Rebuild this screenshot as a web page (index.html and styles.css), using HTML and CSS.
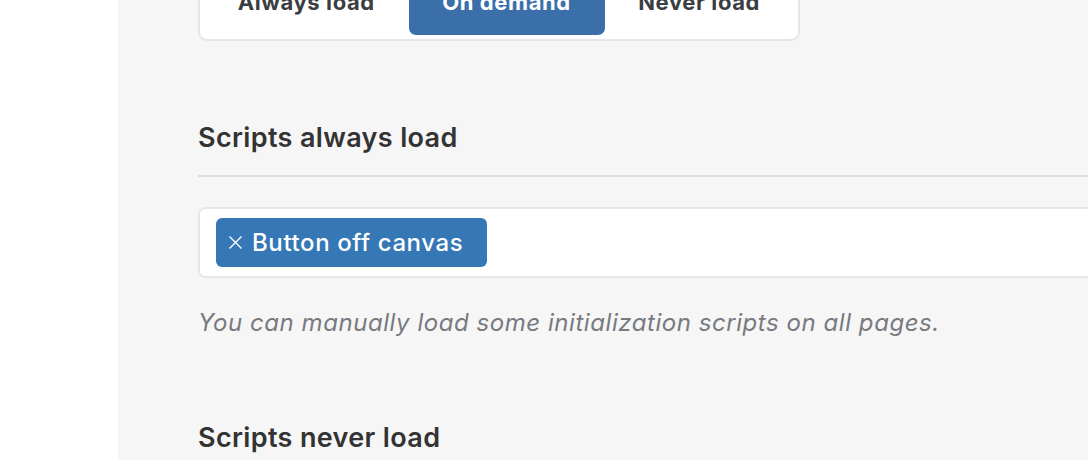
FILE: index.html
```html
<!DOCTYPE html>
<html>
<head>
<meta charset="utf-8">
<link rel="stylesheet" href="styles.css">
</head>
<body>
<div class="layout">
  <aside class="sidebar"></aside>
  <main class="main">
    <div class="content">
      <div class="segmented">
        <button class="seg">Always load</button>
        <button class="seg active">On demand</button>
        <button class="seg">Never load</button>
      </div>

      <section class="section first">
        <h2 class="section-title">Scripts always load</h2>
        <div class="tag-input">
          <span class="tag"><svg class="tag-x" width="15" height="15" viewBox="0 0 15 15"><path d="M1.5 1.5 L13.5 13.5 M13.5 1.5 L1.5 13.5" stroke="#ffffff" stroke-width="1.4" fill="none"/></svg>Button off canvas</span>
        </div>
        <p class="help">You can manually load some initialization scripts on all pages.</p>
      </section>

      <section class="section second">
        <h2 class="section-title">Scripts never load</h2>
      </section>
    </div>
  </main>
</div>
</body>
</html>
```

FILE: styles.css
```css
html, body {
  margin: 0;
  padding: 0;
  height: 100%;
  overflow: hidden;
}
body {
  font-family: Inter, "Liberation Sans", sans-serif;
  color: #333333;
  background: #ffffff;
}
.layout {
  display: flex;
  height: 100%;
}
.sidebar {
  width: 118px;
  flex: 0 0 118px;
  background: #ffffff;
}
.main {
  flex: 1;
  background: #f6f6f6;
  overflow: hidden;
  padding-left: 80px;
}
.content {
  width: 1000px;
  margin-top: -37px;
}
.segmented {
  display: inline-flex;
  background: #ffffff;
  border: 2px solid #e6e6e6;
  border-radius: 9px;
  padding: 4px;
}
.seg {
  font-family: inherit;
  font-size: 22px;
  font-weight: 700;
  letter-spacing: 0.6px;
  color: #3a3d42;
  background: transparent;
  border: 0;
  border-radius: 7px;
  height: 66px;
  padding: 0 33.7px;
  cursor: pointer;
}
.seg.active {
  background: #3b6faa;
  color: #ffffff;
}
.section {
  display: flex;
  flex-direction: column;
}
.section.first {
  margin-top: 81px;
}
.section-title {
  font-size: 27px;
  font-weight: 600;
  letter-spacing: 0.35px;
  color: #333333;
  margin: 0;
  padding-top: 1px;
  padding-bottom: 22px;
  border-bottom: 2px solid #dedede;
  line-height: 30px;
}
.tag-input {
  margin-top: 30px;
  background: #ffffff;
  border: 2px solid #e6e6e6;
  border-radius: 7px;
  padding: 9px 16px;
  display: flex;
  gap: 8px;
}
.tag {
  display: inline-flex;
  align-items: center;
  background: #3578b5;
  color: #ffffff;
  font-size: 24px;
  font-weight: 500;
  letter-spacing: 0.6px;
  height: 49px;
  padding: 0 24px 0 12px;
  border-radius: 6px;
}
.tag-x {
  margin-right: 9px;
  flex: 0 0 auto;
}
.help {
  font-size: 24px;
  font-style: italic;
  letter-spacing: 0.55px;
  color: #777a80;
  margin: 30px 0 0;
}
.section.second {
  margin-top: 85px;
}
```
